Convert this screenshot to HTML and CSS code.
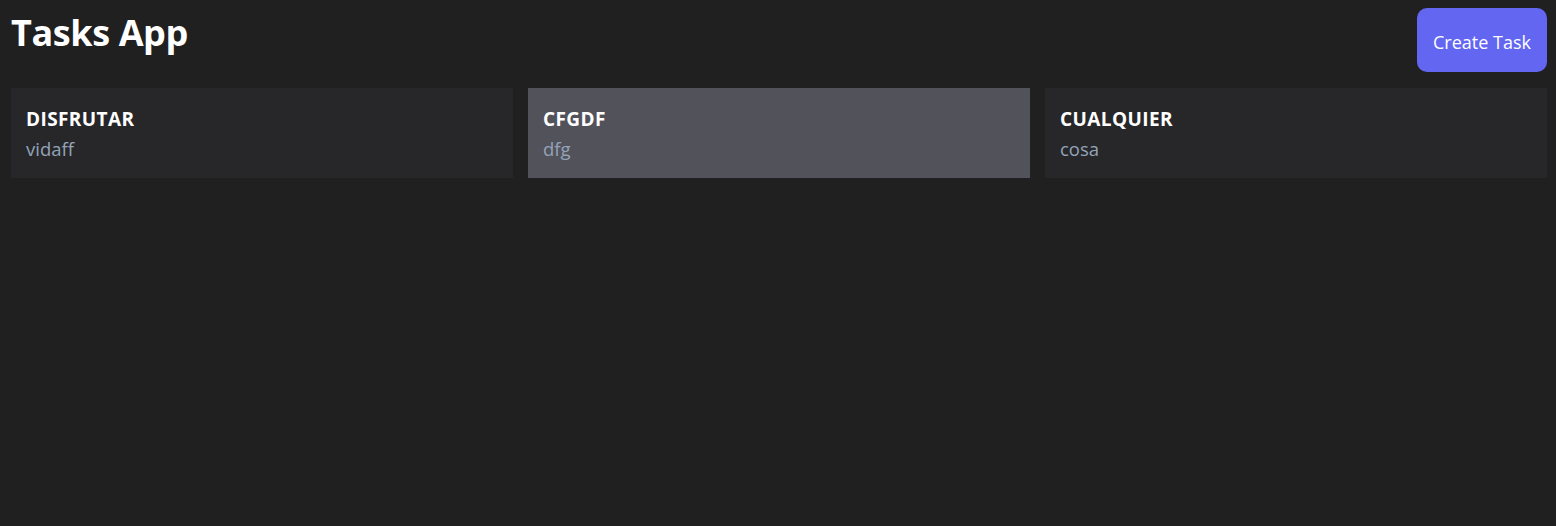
FILE: index.html
```html
<!DOCTYPE html>
<html lang="es">
<head>
<meta charset="utf-8">
<title>Tasks App</title>
<link rel="stylesheet" href="styles.css">
</head>
<body>
<div class="app">
  <header class="header">
    <h1 class="brand">Tasks App</h1>
    <button class="create-btn">Create Task</button>
  </header>
  <main class="task-grid">
    <div class="task-card">
      <h2 class="task-title">DISFRUTAR</h2>
      <p class="task-desc">vidaff</p>
    </div>
    <div class="task-card task-card--active">
      <h2 class="task-title">CFGDF</h2>
      <p class="task-desc">dfg</p>
    </div>
    <div class="task-card">
      <h2 class="task-title">CUALQUIER</h2>
      <p class="task-desc">cosa</p>
    </div>
  </main>
</div>
</body>
</html>
```

FILE: styles.css
```css
* { box-sizing: border-box; }

html, body {
  margin: 0;
  padding: 0;
  background: #202020;
  font-family: "Open Sans", "Noto Sans", sans-serif;
  color: #ffffff;
}

.app {
  padding: 8px 9px 0 11px;
}

.header {
  display: flex;
  justify-content: space-between;
  align-items: flex-start;
  height: 80px;
}

.brand {
  margin: 0;
  font-size: 36px;
  font-weight: 700;
  line-height: 50px;
  letter-spacing: -0.4px;
}

.create-btn {
  background: #6366f1;
  color: #ffffff;
  border: none;
  border-radius: 10px;
  font-family: inherit;
  font-size: 18px;
  line-height: 24px;
  padding: 22px 16px 18px;
  width: 130px;
  height: 64px;
  cursor: pointer;
}

.task-grid {
  display: grid;
  grid-template-columns: repeat(3, 1fr);
  gap: 15px;
}

.task-card {
  background: #27272a;
  padding: 17px 15px 15px;
  height: 90px;
}

.task-card--active {
  background: #52525b;
}

.task-title {
  margin: 0 0 2px;
  font-size: 19px;
  line-height: 28px;
  font-weight: 700;
  letter-spacing: 0.4px;
}

.task-desc {
  margin: 0;
  font-size: 18.5px;
  line-height: 28px;
  color: #94a3b8;
}
```
